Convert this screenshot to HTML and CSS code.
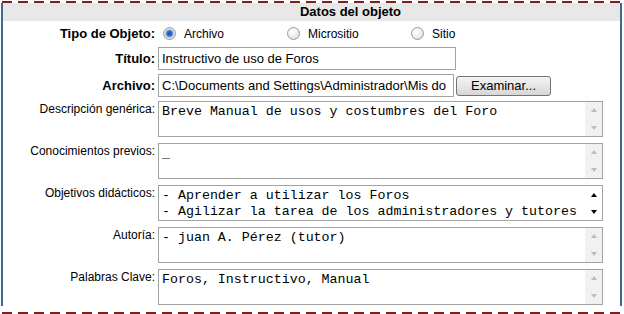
FILE: index.html
```html
<!DOCTYPE html>
<html>
	<head>
		<meta charset="utf-8">
		<title>Datos del objeto</title>
		<link rel="stylesheet" href="styles.css">
	</head>
	<body>
		<div class="panel">
			<div class="rule"></div>
			<div class="frame">
				<div class="head">Datos del objeto</div>

				<!-- tipo de objeto -->
				<div class="row row-tipo">
					<div class="lbl lbl-b">Tipo de Objeto:</div>
					<div class="radios">
						<label class="opt"><span class="radio checked"></span>Archivo</label>
						<label class="opt"><span class="radio"></span>Micrositio</label>
						<label class="opt"><span class="radio"></span>Sitio</label>
					</div>
				</div>

				<div class="row row-input">
					<div class="lbl lbl-b">Título:</div>
					<div class="inp inp-titulo">Instructivo de uso de Foros</div>
				</div>

				<div class="row row-input">
					<div class="lbl lbl-b">Archivo:</div>
					<div class="inp inp-file">C:\Documents and Settings\Administrador\Mis do</div>
					<div class="btn">Examinar...</div>
				</div>

				<!-- areas de texto -->
				<div class="row row-area first">
					<div class="lbl">Descripción genérica:</div>
					<div class="area">
						<div class="area-text">Breve Manual de usos y costumbres del Foro</div>
						<div class="sbar"><span class="up"></span><span class="down"></span></div>
					</div>
				</div>

				<div class="row row-area">
					<div class="lbl">Conocimientos previos:</div>
					<div class="area">
						<div class="area-text">_</div>
						<div class="sbar"><span class="up"></span><span class="down"></span></div>
					</div>
				</div>

				<div class="row row-area">
					<div class="lbl">Objetivos didácticos:</div>
					<div class="area">
						<div class="area-text">- Aprender a utilizar los Foros<br>- Agilizar la tarea de los administradores y tutores</div>
						<div class="sbar on"><span class="up"></span><span class="down"></span></div>
					</div>
				</div>

				<div class="row row-area">
					<div class="lbl">Autoría:</div>
					<div class="area">
						<div class="area-text">- juan A. Pérez (tutor)</div>
						<div class="sbar"><span class="up"></span><span class="down"></span></div>
					</div>
				</div>

				<div class="row row-area">
					<div class="lbl">Palabras Clave:</div>
					<div class="area">
						<div class="area-text">Foros, Instructivo, Manual</div>
						<div class="sbar"><span class="up"></span><span class="down"></span></div>
					</div>
				</div>
			</div>
			<div class="rule bottom"></div>
		</div>
	</body>
</html>
```

FILE: styles.css
```css
*{
	margin: 0;
	padding: 0;
	box-sizing: border-box;
}
body{
	background: #fff;
	font-family: "Liberation Sans", Arial, sans-serif;
	font-size: 12px;
	color: #000;
	width: 624px;
	height: 314px;
	overflow: hidden;
	padding-top: 1px;
}
.rule{
	height: 2px;
	background: repeating-linear-gradient(90deg, #7d1f1f 0 10px, transparent 10px 16px);
	background-position: 2px 0;
}
.rule.bottom{
	margin-top: 6px;
}
.frame{
	margin: 0 2px 0 1px;
	border-left: 2px solid #41698f;
	border-right: 2px solid #41698f;
	padding-bottom: 1px;
}
.head{
	height: 18px;
	line-height: 18px;
	background: #e8e8e8;
	font-size: 13px;
	font-weight: bold;
	text-align: center;
	padding-left: 78px;
}
.row{
	display: flex;
	align-items: center;
}
.lbl{
	width: 152px;
	margin-right: 2px;
	text-align: right;
	white-space: nowrap;
}
.lbl-b{
	font-size: 13px;
	font-weight: bold;
}
.row-tipo{
	margin-top: 1px;
	height: 23px;
}
.radios{
	display: flex;
	padding-left: 6px;
}
.opt{
	display: flex;
	align-items: center;
	width: 124px;
	font-size: 12px;
}
.radio{
	width: 13px;
	height: 13px;
	border-radius: 50%;
	border: 1px solid #9a9a9a;
	background: radial-gradient(circle at 40% 35%, #fff 0, #f1f1f1 45%, #cfcfcf 100%);
	margin-right: 8px;
}
.radio.checked{
	background: radial-gradient(circle, #1c4f9a 0, #3173c4 2.5px, #a9c8ea 4px, #eef3f8 5.5px);
}
.row-input{
	margin-top: 2px;
	height: 23px;
}
.row-input + .row-input{
	margin-top: 4px;
}
.inp{
	height: 23px;
	border: 1px solid #a3a3a3;
	font-size: 13px;
	line-height: 21px;
	padding-left: 3px;
	white-space: nowrap;
	overflow: hidden;
	margin-left: 1px;
}
.inp-titulo{
	width: 298px;
}
.inp-file{
	width: 296px;
}
.btn{
	width: 95px;
	height: 20px;
	margin-left: 2px;
	border: 1px solid #747474;
	border-radius: 3px;
	background: linear-gradient(#f4f4f4, #e6e6e6 50%, #d6d6d6);
	font-size: 13px;
	line-height: 18px;
	text-align: center;
}
.row-area{
	align-items: flex-start;
	margin-top: 6px;
}
.row-area.first{
	margin-top: 4px;
}
.row-area .lbl{
	padding-top: 1px;
	line-height: 14px;
}
.area{
	display: flex;
	width: 445px;
	height: 36px;
	margin-left: 1px;
	border: 1px solid #a3a3a3;
}
.area-text{
	flex: 1;
	font-family: "Liberation Mono", "Courier New", monospace;
	font-size: 13.3px;
	line-height: 16px;
	padding: 2px 0 0 3px;
	white-space: nowrap;
	overflow: hidden;
}
.sbar{
	width: 17px;
	background: #f1f1f1;
	display: flex;
	flex-direction: column;
	justify-content: space-between;
	align-items: center;
	padding: 6px 0 6px;
}
.sbar.on{
	background: #fff;
	padding: 7px 0 6px;
}
.up, .down{
	width: 0;
	height: 0;
	border-left: 3.5px solid transparent;
	border-right: 3.5px solid transparent;
}
.up{
	border-bottom: 4px solid #bcbcbc;
}
.down{
	border-top: 4px solid #bcbcbc;
}
.sbar.on .up{
	border-bottom-color: #000;
}
.sbar.on .down{
	border-top-color: #000;
}
```
